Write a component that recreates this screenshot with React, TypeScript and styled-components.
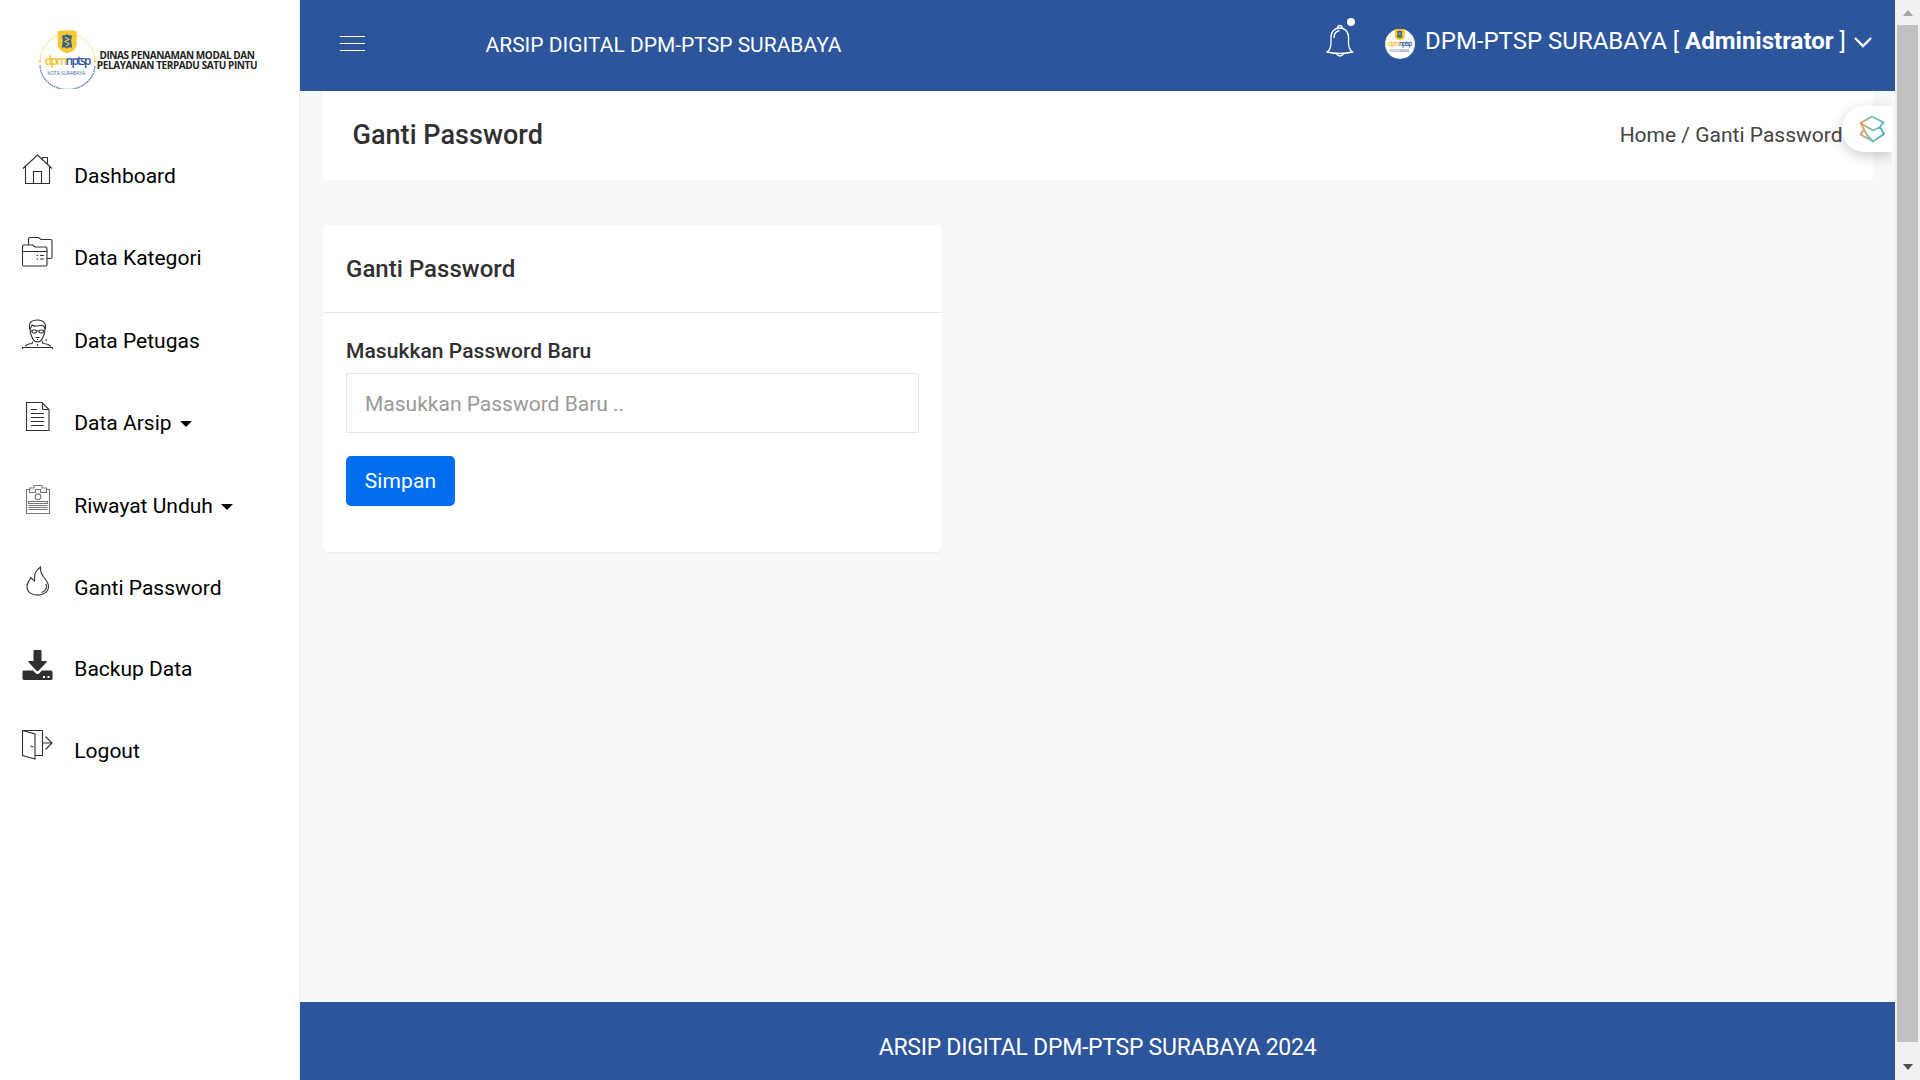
import React from 'react';
import styled, { createGlobalStyle } from 'styled-components';

const Global = createGlobalStyle`
  * { box-sizing: border-box; }
  body { margin: 0; overflow: hidden; background: #f6f8fa; font-family: Roboto, "Liberation Sans", sans-serif; font-size: 21px; color: #303030; }
  h1, h2, p { margin: 0; }
`;

const Page = styled.div`display: flex; height: 1080px; width: 1920px;`;
const Sidebar = styled.aside`flex: 0 0 300px; background: #fff; border-right: 1px solid #ebedf2;`;
const Brand = styled.div`height: 129px; padding: 27px 0 0 37px; display: flex;`;
const BrandText = styled.div`
  padding-top: 22.5px; margin-left: -4px; width: 164px; flex: none; white-space: nowrap; text-align: center;
  font: 700 10px/10.5px "Open Sans", sans-serif; letter-spacing: -.4px; color: #222;
`;
const Menu = styled.nav`display: flex; flex-direction: column; padding-left: 22px;`;
const MenuItem = styled.a<{ $height: number; $iconTop: number }>`
  display: flex; height: ${p => p.$height}px; align-items: flex-start; color: #000; white-space: nowrap;
  svg { flex: none; margin-top: ${p => p.$iconTop}px; }
`;
const MenuText = styled.span`margin-left: 21.3px; padding-top: 34px; line-height: 27px;`;
const Caret = styled.i`
  margin: 45px 0 0 8px; border: 6px solid transparent; border-top-color: #000; border-bottom: 0;
`;
const Main = styled.div`flex: 1; display: flex; flex-direction: column; min-width: 0;`;
const Topbar = styled.header`
  height: 91px; background: #2c559c; color: #fff; display: flex; padding: 0 22px 0 40px; flex: none;
`;
const Burger = styled.div`
  margin-top: 36px; width: 25px; height: 15px; display: flex; flex-direction: column; justify-content: space-between;
`;
const BurgerLine = styled.span`height: 1px; background: #fff;`;
const AppTitle = styled.div`margin: 32px auto 0 120.5px; line-height: 27px;`;
const Bell = styled.div`position: relative; width: 28px; height: 36px; margin: 24px 31px 0 0;`;
const Dot = styled.span`position: absolute; left: 21px; top: -6px; width: 8px; height: 8px; border-radius: 50%; background: #fff;`;
const Account = styled.div`display: flex; font-size: 24px; line-height: 30px; white-space: nowrap;`;
const AvatarBox = styled.div`margin: 29px 10px 0 0; width: 30px; height: 30px; line-height: 0;`;
const AccountName = styled.span`padding-top: 26px; width: 420px;`;
const Chevron = styled.svg`margin: 37px 1px 0 9px;`;
const Crumbs = styled.section`
  position: relative; margin: 0 22px 0 23px; height: 89px; background: #fff; display: flex;
  justify-content: space-between; padding: 0 30.5px 0 29.5px; flex: none;
`;
const PageTitle = styled.h1`font-size: 27px; font-weight: 500; line-height: 32px; padding-top: 28px; letter-spacing: .04px;`;
const Trail = styled.p`padding-top: 31px; line-height: 27px; color: #444;`;
const Floater = styled.div`
  position: absolute; left: 1519px; top: 15px; width: 50px; height: 46px; border-radius: 23px 0 0 23px;
  background: rgba(255,255,255,.93); box-shadow: 0 4px 14px rgba(0,0,0,.2); clip-path: inset(-24px 0 -24px -24px);
  display: flex; align-items: center; justify-content: center; padding: 0 0 1px 10px;
`;
const Card = styled.section`
  margin: 45px 0 0 23px; width: 619px; height: 327px; background: #fff; border-radius: 5px;
  box-shadow: 0 1px 2px rgba(0,0,0,.06); flex: none;
`;
const CardHead = styled.div`height: 88px; border-bottom: 1px solid #e7eaec; padding: 28px 23px 0;`;
const CardTitle = styled.h2`font-size: 24px; font-weight: 500; line-height: 32px; letter-spacing: .03px;`;
const Form = styled.form`padding: 25px 23px 0; display: flex; flex-direction: column; align-items: flex-start;`;
const Label = styled.label`font-weight: 500; line-height: 27px; margin-bottom: 8px; letter-spacing: .06px;`;
const Input = styled.input`
  width: 573px; height: 60px; border: 1px solid #e5e6e7; border-radius: 1px; padding: 1px 18px 0;
  font: inherit; outline: 0;
  &::placeholder { color: #999; opacity: 1; }
`;
const Button = styled.button`
  margin-top: 23px; width: 109px; height: 50px; border: 0; border-radius: 5px; background: #006df0; color: #fff;
  font: inherit; letter-spacing: .1px; padding: 0;
`;
const Footer = styled.footer`
  margin-top: auto; height: 78px; background: #2c559c; color: #fff; text-align: center; font-size: 23px; letter-spacing: -.27px; line-height: 30px; padding-top: 31px;
`;
const Scrollbar = styled.div`
  flex: 0 0 25px; background: #f1f1f1; display: flex; flex-direction: column; align-items: center;
`;
const Arrow = styled.i<{ $down?: boolean }>`
  flex: none; border: 5.5px solid transparent;
  ${p => p.$down ? 'border-top: 6px solid #505050; border-bottom: 0; margin-top: 22px;' : 'border-bottom: 6px solid #a3a3a3; border-top: 0; margin: 10px 0 9px;'}
`;
const Thumb = styled.div`width: 21px; height: 1017px; background: #c1c1c1;`;

const Seal = ({ size, avatar }: { size: number; avatar?: boolean }) => (
  <svg width={size} height={size} viewBox={avatar ? '1.500 4 56 56' : '0 0 60 60'}>
    {avatar && <circle cx="29.500" cy="32" r="28" fill="#fff" />}
    <path d="M3 33a26.500 26.500 0 0 1 53 0" fill="none" stroke="#f8dc7c" strokeWidth=".8" />
    <path d="M3 37a26.500 23.500 0 0 0 53 0" fill="none" stroke="#6685bd" strokeWidth="1.400" strokeDasharray="1.600 .7" />
    <circle cx="3" cy="33.500" r="1" fill="#f6c430" /><circle cx="56" cy="33.500" r="1" fill="#f6c430" />
    <path d="M20 4q9-1.500 18.500 0V17q0 6-9.300 8.500Q20 23 20 17z" fill="#fac832" />
    <path d="M24 8q2 1 5-1 3 2 5 1l-1 5 1 7q-3-1-5 1-2-2-5-1l1-7z" fill="#39608b" />
    <path d="M27 10l4 2-4 2 4 2-3 3" fill="none" stroke="#e7c944" strokeWidth="1.100" />
    <text x="7.500" y="36.500" fontFamily="Open Sans" fontSize="11.500" fontWeight="600" letterSpacing="-1.700" fill="#2d559d"><tspan fill="#f7c12b">dpm</tspan>nptsp</text>
    <text x="10" y="46.500" fontFamily="Open Sans" fontSize="5" letterSpacing="-.2" fill="#4a6aa5">KOTA SURABAYA</text>
  </svg>
);

const drawings: Record<string, React.ReactNode> = {
  home: <path d="M1 14.500 15.500 1 30 14.500M3.500 12.500v17h24v-17M11.500 29.500V17.500h8v12M20.500 5.500V3.500h5v7" />,
  folders: <><path d="M.5 10.500q0-1.500 1.500-1.500h8.500l2.500 2h10.500q1.500 0 1.500 1.500v16q0 1.500-1.500 1.500H2Q.5 30 .5 28.500zM.5 15.500h24M6.500 8.500v-6Q6.500 1.500 8 1.500h8.500l2.500 2h9.500q1.500 0 1.500 1.500v16q0 1.500-1.500 1.500h-4" /><path d="M14.500 19.500h1.500M18 19.500h4M14.500 23h1.500M18 23h4" /></>,
  person: <><path d="M8 11C6 4 9 1 15.500 1S25 5 23 11M8 10l2-4c4 3 8-1 12 1l1 3M8 12l1.500 5q2 6 6 6t6-6l1.500-5" /><rect x="10" y="11" width="4.500" height="3" rx="1.500" /><rect x="17" y="11" width="4.500" height="3" rx="1.500" /><path d="M14.500 12h2.500M8 11l2 1M23 11l-1.500 1M13.500 18.500h4M15 20.500h1M.5 30v-1.500h30V30M3 27q2-2 7-2.500l1-2M20 22l1 2.500q6 .5 8 3M15.500 25v2M23.500 20.500l1.500 1" /></>,
  file: <path d="M4.500 1.500h15.500l7 7v21h-22.500zM20.500 1.500v7h6.500M9 8.500h6M9 12.500h13M9 16.500h13M9 20.500h13M9 24.500h13" />,
  clipboard: <><path d="M8 5.500H4.500v24h23v-24H24M7.500 8.500V4h4.500V1.500h8V4h4.500v4.500h-6V5.500h-5v3z" /><circle cx="16" cy="12.700" r="2.800" /><path d="M6.500 17.500h19v2h-19zM6.500 21.500h19M6.500 23.500h19M6.500 25.500h19" /></>,
  flame: <path d="M18.500 1C11 6 13 11 12.500 15L8.500 11.500C8 15 5 16 5 20.500c0 12 21.500 11 21.500 0C26.500 13 17.500 11 18.500 1zM24 18c1.500 4.500-1 7.500-4.500 8.500" />,
  exit: <path d="M.5 1.500v25l12.500 3.500V5zM.5 1.500h20v25h-7M8.500 17l3 1M20.500 14h10M23.500 7.500l6.500 6.500-6.500 6.500" />,
};

const Icon = ({ name }: { name: string }) => name === 'backup' ? (
  <svg width="31" height="31" viewBox="0 0 31 31" fill="#303030">
    <path d="M11.500 1q0-1 1-1h6q1 0 1 1v10H24q1.500 0 .5 1.200l-8 8.600q-1 1-2 0l-8-8.600Q5.500 11 7 11h4.500zM1.500 20.500H11l3 3q1.500 1.200 3 0l3-3h9q1.500 0 1.500 1.500v6.500q0 1.500-1.500 1.500h-26.500Q.5 30 .5 28.500V22q0-1.500 1-1.500z" />
    <path d="M21 26h2v2h-2zM25.500 26h2v2h-2z" fill="#fff" />
  </svg>
) : (
  <svg width="31" height="31" viewBox="0 0 31 31" fill="none" stroke={name === 'clipboard' ? '#77757a' : '#303030'} strokeWidth="1.100">{drawings[name]}</svg>
);

const items = [
  { icon: 'home', text: 'Dashboard', height: 82 },
  { icon: 'folders', text: 'Data Kategori', height: 83 },
  { icon: 'person', text: 'Data Petugas', height: 82 },
  { icon: 'file', text: 'Data Arsip', height: 83, caret: true },
  { icon: 'clipboard', text: 'Riwayat Unduh', height: 82, caret: true },
  { icon: 'flame', text: 'Ganti Password', height: 81 },
  { icon: 'backup', text: 'Backup Data', height: 82, iconTop: 28 },
  { icon: 'exit', text: 'Logout', height: 82 },
];

export default function App() {
  return (
    <Page>
      <Global />
      <Sidebar>
        <Brand>
          <Seal size={62} />
          <BrandText>
            <div>DINAS PENANAMAN MODAL DAN</div>
            <div>PELAYANAN TERPADU SATU PINTU</div>
          </BrandText>
        </Brand>
        <Menu>
          {items.map(i => (
            <MenuItem key={i.text} $height={i.height} $iconTop={i.iconTop ?? 25}>
              <Icon name={i.icon} /><MenuText>{i.text}</MenuText>{i.caret && <Caret />}
            </MenuItem>
          ))}
        </Menu>
      </Sidebar>
      <Main>
        <Topbar>
          <Burger><BurgerLine /><BurgerLine /><BurgerLine /></Burger>
          <AppTitle>ARSIP DIGITAL DPM-PTSP SURABAYA</AppTitle>
          <Bell>
            <svg width="28" height="34" viewBox="0 0 28 34" fill="none" stroke="#fff" strokeWidth="1.300">
              <path d="M1 28q4-3 4-9v-6C5 1 22.500 1 22.500 13v6q0 6 4 9-12.500 3-25.500 0zM11.500 4q0-2.500 2.300-2.500t2.300 2.500M10 29.500q4 5 8 0M8 14q0-6.500 5.500-7.500" />
            </svg>
            <Dot />
          </Bell>
          <Account>
            <AvatarBox><Seal size={30} avatar /></AvatarBox>
            <AccountName>DPM-PTSP SURABAYA [ <b>Administrator</b> ]</AccountName>
            <Chevron width="18" height="11" viewBox="0 0 18 11" fill="none" stroke="#fff" strokeWidth="2.300"><path d="m1 1 8 8 8-8" /></Chevron>
          </Account>
        </Topbar>
        <Crumbs>
          <PageTitle>Ganti Password</PageTitle>
          <Trail>Home / Ganti Password</Trail>
          <Floater>
            <svg width="26" height="28" viewBox="0 0 26 28" fill="none" strokeWidth="1.900" strokeLinejoin="round" strokeLinecap="round">
              <defs><linearGradient id="ribbon" gradientUnits="userSpaceOnUse" x1="1" y1="14" x2="25" y2="16"><stop stopColor="#f19a62" /><stop offset=".5" stopColor="#75c6ae" /><stop offset="1" stopColor="#4aaad5" /></linearGradient></defs>
              <path stroke="url(#ribbon)" d="M1.500 8 13 1.500 24.500 7.500 21 12l-7 3.500zM21 12l4 7-11 7.500L1.500 19.500 4.500 15M1.500 8 8 20l6 6.500" />
            </svg>
          </Floater>
        </Crumbs>
        <Card>
          <CardHead><CardTitle>Ganti Password</CardTitle></CardHead>
          <Form>
            <Label htmlFor="pw">Masukkan Password Baru</Label>
            <Input id="pw" type="password" placeholder="Masukkan Password Baru .." />
            <Button type="button">Simpan</Button>
          </Form>
        </Card>
        <Footer>ARSIP DIGITAL DPM-PTSP SURABAYA 2024</Footer>
      </Main>
      <Scrollbar><Arrow /><Thumb /><Arrow $down /></Scrollbar>
    </Page>
  );
}
